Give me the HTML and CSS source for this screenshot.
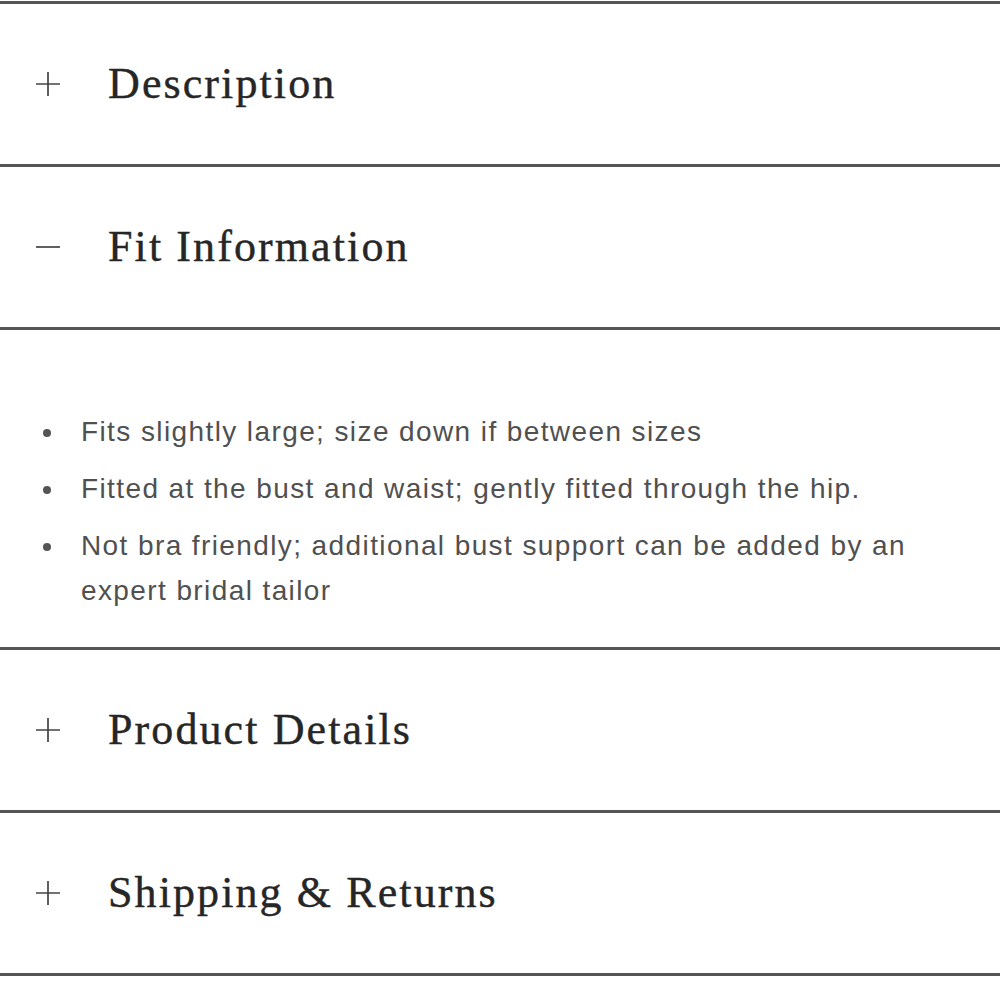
FILE: index.html
```html
<!DOCTYPE html>
<html lang="en">
<head>
<meta charset="utf-8">
<title>Accordion</title>
<link rel="stylesheet" href="styles.css">
</head>
<body>
<div class="accordion">
  <section class="item">
    <div class="head">
      <svg class="icon" viewBox="0 0 26 26" width="26" height="26"><path d="M1 13H25M13 1V25"/></svg>
      <h2 class="title">Description</h2>
    </div>
  </section>
  <section class="item">
    <div class="head">
      <svg class="icon" viewBox="0 0 26 26" width="26" height="26"><path d="M1 13H25"/></svg>
      <h2 class="title">Fit Information</h2>
    </div>
  </section>
  <section class="item panel">
    <ul class="list">
      <li>Fits slightly large; size down if between sizes</li>
      <li>Fitted at the bust and waist; gently fitted through the hip.</li>
      <li>Not bra friendly; additional bust support can be added by an expert bridal tailor</li>
    </ul>
  </section>
  <section class="item">
    <div class="head">
      <svg class="icon" viewBox="0 0 26 26" width="26" height="26"><path d="M1 13H25M13 1V25"/></svg>
      <h2 class="title">Product Details</h2>
    </div>
  </section>
  <section class="item last">
    <div class="head">
      <svg class="icon" viewBox="0 0 26 26" width="26" height="26"><path d="M1 13H25M13 1V25"/></svg>
      <h2 class="title">Shipping &amp; Returns</h2>
    </div>
  </section>
</div>
</body>
</html>
```

FILE: styles.css
```css
html, body {
  margin: 0;
  padding: 0;
  background: #fff;
}

.accordion {
  padding-top: 1px;
}

.item {
  border-top: 3px solid #555;
}

.item.last {
  border-bottom: 3px solid #555;
}

.head {
  height: 160px;
  display: flex;
  align-items: center;
  padding-left: 35px;
  gap: 47px;
}

.icon {
  flex: none;
  fill: none;
  stroke: #444;
  stroke-width: 1.7;
}

.title {
  margin: 0;
  font-family: "Liberation Serif", "Times New Roman", serif;
  font-weight: normal;
  font-size: 44px;
  letter-spacing: 2.1px;
  color: #262626;
  line-height: 1.2;
  -webkit-text-stroke: 0.4px #262626;
}

.panel {
  height: 320px;
  box-sizing: border-box;
  padding: 79px 40px 0 81px;
}

.list {
  margin: 0;
  padding: 0;
  list-style: none;
  display: flex;
  flex-direction: column;
  gap: 12px;
  font-family: "Liberation Sans", Arial, sans-serif;
  font-size: 28px;
  letter-spacing: 1.4px;
  line-height: 45px;
  color: #505050;
}

.list li {
  position: relative;
}

.list li::before {
  content: "";
  position: absolute;
  left: -38px;
  top: 20px;
  width: 8px;
  height: 8px;
  border-radius: 50%;
  background: #555;
}
```
